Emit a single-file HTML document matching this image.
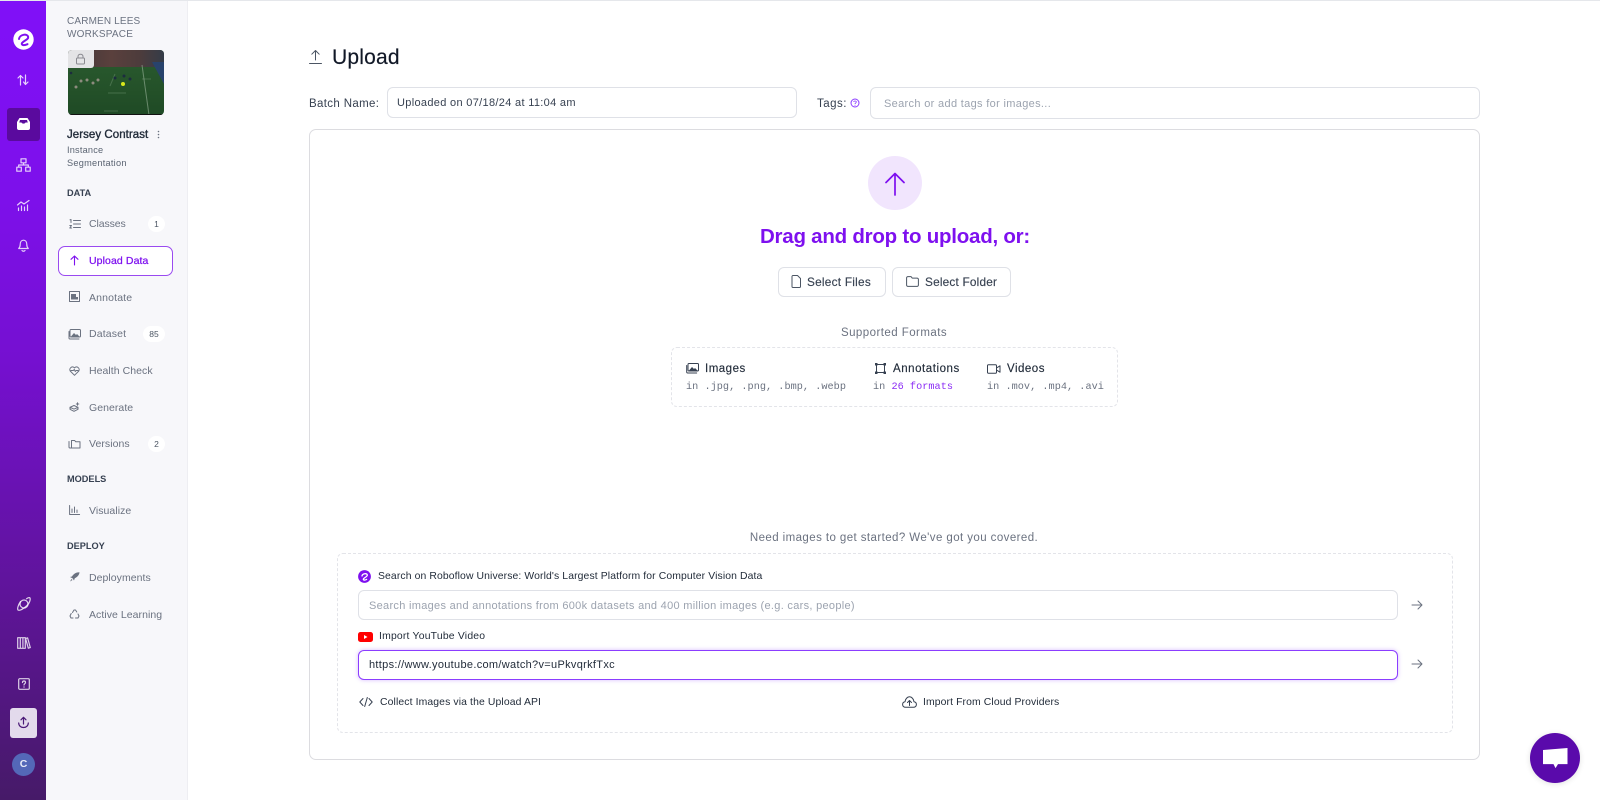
<!DOCTYPE html>
<html lang="en"><head><meta charset="utf-8"><title>Upload</title>
<style>
html,body{margin:0;padding:0;width:1600px;height:800px;overflow:hidden;background:#fff;font-family:"Liberation Sans",sans-serif;color:#1f2937}
.t{position:absolute;white-space:nowrap;line-height:16px;height:16px}
.b{position:absolute;box-sizing:border-box;background:#fff}
svg{position:absolute;overflow:visible}
.nav{font-size:10.5px;color:#6b7280;left:89px;letter-spacing:.05px}
.sec{font-size:9.2px;font-weight:bold;color:#374151;left:67px;letter-spacing:0}
.med{-webkit-text-stroke:.15px currentColor}
.badge{position:absolute;background:#fff;border-radius:9px;height:16px;line-height:16px;text-align:center;font-size:8.5px;color:#4b5563}
.mono{font-family:"Liberation Mono",monospace;font-size:10.2px;letter-spacing:.04px;color:#6b7280}
.ic{fill:none;stroke:#fff;stroke-width:1.2;stroke-opacity:.8;stroke-linecap:round;stroke-linejoin:round}
.g{fill:none;stroke:#6b7280;stroke-width:1;stroke-linecap:round;stroke-linejoin:round}
.d{fill:none;stroke:#374151;stroke-width:1;stroke-linecap:round;stroke-linejoin:round}
</style></head><body>

<div style="position:absolute;left:0;top:0;width:1600px;height:1px;background:#e5e7eb"></div>
<div style="position:absolute;left:0;top:1px;width:46px;height:799px;background:linear-gradient(180deg,#8010f8 0%,#7d10ea 25%,#7510d0 45%,#5e1498 75%,#461a68 100%)"></div>
<div style="position:absolute;left:46px;top:1px;width:141px;height:799px;background:#f7f7fa;border-right:1px solid #eeeef2"></div>

<!-- rail -->
<svg style="left:13px;top:29px" width="21" height="21" viewBox="0 0 21 21"><circle cx="10.5" cy="10.5" r="10.2" fill="#fff"/><path d="M6 10C6.500 5.500 14.500 4 15.200 8c.3 2.500-4.200 3.500-6.200 6-1 1.500 1 3.200 5.500 1.200" fill="none" stroke="#7f10f0" stroke-width="2" stroke-linecap="round"/></svg>
<svg style="left:17px;top:74px" width="12" height="12" viewBox="0 0 12 12"><path class="ic" d="M3.500 11V1.500M1 4l2.500-2.500L6 4M8.500 1v9.500M6.500 8l2 2.500L11 8"/></svg>
<div style="position:absolute;left:7px;top:108px;width:33px;height:33px;border-radius:3px;background:#5a0a9e"></div>
<svg style="left:17px;top:118px" width="13" height="12" viewBox="0 0 13 12"><path d="M2.500 0h8L13 4v6a2 2 0 0 1-2 2H2a2 2 0 0 1-2-2V4zM3 2 2.200 4.500H4.500c.5 1.500 3.500 1.500 4 0h2.300L10 2z" fill="#fff" fill-rule="evenodd"/></svg>
<svg style="left:16px;top:158px" width="15" height="14" viewBox="0 0 15 14"><path class="ic" d="M5 .8h5v4H5zM7.500 4.800V7M2.700 9V7h9.600v2M.8 9.200h4.500v4H.8zM9.700 9.200h4.500v4H9.700z"/></svg>
<svg style="left:17px;top:200px" width="13" height="11" viewBox="0 0 13 11"><path class="ic" d="M.5 5 4 2l3 2 5-3.500M1.500 10.500V8M4.500 10.500V6M7.500 10.500V7M10.500 10.500V5"/></svg>
<svg style="left:18px;top:239px" width="11" height="13" viewBox="0 0 11 13"><path class="ic" d="M.7 9.500c1-1 1.500-2 1.500-4C2.200 3 3.500 1.200 5.500 1.200S8.800 3 8.800 5.500c0 2 .5 3 1.500 4zM4 11.500c.8 1 2.200 1 3 0"/></svg>
<svg style="left:17px;top:597px" width="14" height="14" viewBox="0 0 14 14"><circle class="ic" cx="7" cy="7" r="4"/><path class="ic" d="M3.500 4.500C.8 8.500.2 12 1 13c1.500 1 5-1 8.500-4S13.500 2 13 1c-.5-.7-2-.3-3.500.8"/></svg>
<svg style="left:17px;top:637px" width="14" height="12" viewBox="0 0 14 12"><path class="ic" d="M.7.700h2.600v10.600H.7zM3.300.700h2.600v10.600H3.300zM5.900.700h2.400v10.600H5.900zM8.600 1.500l2-.6 2.700 9.700-2 .6z"/></svg>
<svg style="left:18px;top:678px" width="12" height="12" viewBox="0 0 12 12"><rect class="ic" x=".7" y=".7" width="10.600" height="10.600" rx="1"/><path class="ic" d="M4.500 4.500C4.500 2.500 7.500 2.500 7.500 4.500 7.500 5.700 6 5.700 6 7"/><circle cx="6" cy="9" r=".6" fill="#fff"/></svg>
<div style="position:absolute;left:10px;top:708px;width:27px;height:30px;border-radius:3px;background:#e3daec"></div>
<svg style="left:17px;top:716px" width="13" height="13" viewBox="0 0 13 13"><path d="M6.500 8V1.500M4 3.800l2.500-2.500L9 3.800M1.700 7c0 6 9.600 6 9.600 0" fill="none" stroke="#4b1a78" stroke-width="1.200" stroke-linecap="round" stroke-linejoin="round"/></svg>
<div style="position:absolute;left:12px;top:753px;width:23px;height:23px;border-radius:50%;background:#5468b8;color:#e8ebf7;font-size:10.500px;font-weight:bold;line-height:23px;text-align:center">C</div>

<!-- project -->
<div class="t" style="left:67px;top:14px;font-size:10px;color:#6b7280;letter-spacing:.15px">CARMEN LEES</div>
<div class="t" style="left:67px;top:27px;font-size:10px;color:#6b7280;letter-spacing:.2px">WORKSPACE</div>
<svg style="left:68px;top:50px" width="96" height="65" viewBox="0 0 96 65">
<defs><clipPath id="c"><rect width="96" height="65" rx="4"/></clipPath>
<linearGradient id="gr" x1="0" y1="0" x2="0" y2="1"><stop offset="0" stop-color="#2b5c2f"/><stop offset="1" stop-color="#1f4a25"/></linearGradient>
<linearGradient id="cr" x1="0" y1="0" x2="1" y2="0"><stop offset="0" stop-color="#3f3638"/><stop offset=".45" stop-color="#5a403d"/><stop offset=".75" stop-color="#4d3c3c"/><stop offset="1" stop-color="#343c48"/></linearGradient></defs>
<g clip-path="url(#c)"><rect width="96" height="65" fill="url(#gr)"/><rect width="96" height="17" fill="url(#cr)"/>
<path d="M74 15 81 65" stroke="#9ab39b" stroke-width="1" opacity=".6"/><path d="M42 36 47 24M74 29h9M36 61h14M40 43h18" stroke="#8aa98b" stroke-width="1" opacity=".35"/>
<path d="M84 12 96 34V12z" fill="#28436c"/>
<g fill="#a89a94" opacity=".8"><circle cx="8" cy="37" r="1.500"/><circle cx="13" cy="31" r="1.500"/><circle cx="19" cy="30" r="1.500"/><circle cx="25" cy="33" r="1.500"/><circle cx="30" cy="30" r="1.500"/></g>
<g fill="#1c2c3f"><circle cx="47" cy="28" r="1.500"/><circle cx="62" cy="29" r="1.500"/><circle cx="56" cy="26" r="1.500"/><circle cx="3" cy="23" r="1.300"/></g>
<circle cx="55" cy="34" r="2" fill="#d8e81c"/><path d="M0 65h96" stroke="#111" stroke-width="2"/></g>
<path d="M0 4a4 4 0 0 1 4-4h22v15a3 3 0 0 1-3 3H0z" fill="#e4e4e6"/>
<rect x="8.500" y="8" width="8" height="6" rx="1" fill="none" stroke="#8a8a90" stroke-width="1"/><path d="M10 8V6.500c0-3 5-3 5 0V8" fill="none" stroke="#8a8a90" stroke-width="1"/></svg>
<div class="t med" style="left:67px;top:127px;font-size:11.500px;color:#1f2937;letter-spacing:.05px;-webkit-text-stroke-width:.35px">Jersey Contrast</div>
<svg style="left:157px;top:130px" width="3" height="10" viewBox="0 0 3 10"><g fill="#6b7280"><circle cx="1.500" cy="1.500" r=".8"/><circle cx="1.500" cy="4.500" r=".8"/><circle cx="1.500" cy="7.500" r=".8"/></g></svg>
<div class="t" style="left:67px;top:142px;font-size:9.200px;color:#5b6472;letter-spacing:.2px">Instance</div>
<div class="t" style="left:67px;top:155px;font-size:9.200px;color:#5b6472;letter-spacing:.25px">Segmentation</div>

<div class="t sec" style="top:184.500px">DATA</div>
<div class="t sec" style="top:471px">MODELS</div>
<div class="t sec" style="top:537.500px">DEPLOY</div>

<svg style="left:69px;top:219px" width="12" height="10" viewBox="0 0 12 10"><path class="g" d="M4.500 1.500h7M4.500 5h7M4.500 8.500h7M1 .8l1-.3v3M.8 6.500h1.700L.8 9h1.800"/></svg>
<div class="t nav" style="top:216px;letter-spacing:-.1px">Classes</div>
<div class="badge" style="left:148px;top:216px;width:17px">1</div>

<div class="b" style="left:58px;top:246px;width:115px;height:30px;border:1px solid #9a4af0;border-radius:7px"></div>
<svg style="left:70px;top:255px" width="9" height="11" viewBox="0 0 9 11"><path d="M4.500 10V1M1 4.300 4.500 1 8 4.300" fill="none" stroke="#7e10ef" stroke-width="1.100" stroke-linecap="round" stroke-linejoin="round"/></svg>
<div class="t med" style="left:89px;top:253px;font-size:10.500px;color:#7e10ef;letter-spacing:.1px;-webkit-text-stroke-width:.25px">Upload Data</div>

<svg style="left:69px;top:291px" width="11" height="11" viewBox="0 0 11 11"><rect class="g" x=".5" y=".5" width="10" height="10"/><path d="M2 8V3h5v3h2v2.500H2z" fill="#6b7280"/></svg>
<div class="t nav" style="top:289.500px;letter-spacing:.15px">Annotate</div>
<svg style="left:68px;top:329px" width="13" height="11" viewBox="0 0 13 11"><rect class="g" x="2" y=".5" width="10.500" height="7.500" rx="1"/><path class="g" d="M1 2.500v6.500a1 1 0 0 0 1 1h9"/><path d="M3 7.500l3-3.500 2 2 1-1 2.500 2.500z" fill="#6b7280"/></svg>
<div class="t nav" style="top:326px;letter-spacing:.15px">Dataset</div>
<div class="badge" style="left:143px;top:326px;width:22px">85</div>
<svg style="left:69px;top:366px" width="11" height="10" viewBox="0 0 11 10"><path class="g" d="M5.500 9.300 1.200 5C-.5 2.500 3.500-.8 5.500 2c2-2.800 6 .5 4.300 3zM2 4.500h2.300l1-1 1 2 .8-1H9"/></svg>
<div class="t nav" style="top:363px">Health Check</div>
<svg style="left:69px;top:402px" width="11" height="11" viewBox="0 0 11 11"><path class="g" d="M5 3.500 1 5.300l4 1.800 4-1.800zM1 5.300v2l4 2 4-2v-2M8.500.8v2.500M7.300 2h2.500"/></svg>
<div class="t nav" style="top:400px">Generate</div>
<svg style="left:68px;top:439px" width="13" height="10" viewBox="0 0 13 10"><path class="g" d="M3.500 9V1.500h3.200l1 1.300H12V9zM1 2.500V8a1 1 0 0 0 1 1h1.500"/></svg>
<div class="t nav" style="top:436px">Versions</div>
<div class="badge" style="left:148px;top:436px;width:17px">2</div>
<svg style="left:69px;top:505px" width="11" height="10" viewBox="0 0 11 10"><path class="g" d="M.6.500v9h10M3 7.500V4M5.500 7.500V2M8 7.500V5"/></svg>
<div class="t nav" style="top:503px">Visualize</div>
<svg style="left:69px;top:572px" width="11" height="10" viewBox="0 0 11 10"><path d="M10.500.3C7 .3 4.500 2 3 4.500L1 5l2.500 1.200L5 8.500l.8-2.200C8.500 5 10.300 3 10.500.3zM2.500 7 1 9.500 3.500 8z" fill="#6b7280"/></svg>
<div class="t nav" style="top:569.500px">Deployments</div>
<svg style="left:69px;top:609px" width="11" height="10" viewBox="0 0 11 10"><path class="g" d="M3.500 3.500 5 1h1.500l1.300 2M9 5l1 2-1 2H6.500M4 9H2L1 7l1.200-2.500"/></svg>
<div class="t nav" style="top:606.500px">Active Learning</div>

<!-- header -->
<svg style="left:309px;top:49px" width="13" height="16" viewBox="0 0 13 16"><path d="M6.500 11V1.500M2.800 5.200l3.700-3.700 3.700 3.700M.5 14.500h12" fill="none" stroke="#4b5563" stroke-width="1" stroke-linecap="round" stroke-linejoin="round"/></svg>
<div class="t med" style="left:332px;top:47px;height:22px;line-height:22px;font-size:21px;color:#111827;letter-spacing:.2px">Upload</div>
<div class="t" style="left:309px;top:96px;font-size:11.500px;color:#374151;letter-spacing:.35px">Batch Name:</div>
<div class="b" style="left:387px;top:87px;width:410px;height:31px;border:1px solid #dfe1e7;border-radius:6px"></div>
<div class="t" style="left:397px;top:95px;font-size:11px;color:#374151;letter-spacing:.32px">Uploaded on 07/18/24 at 11:04 am</div>
<div class="t" style="left:817px;top:96px;font-size:11.500px;color:#374151;letter-spacing:.5px">Tags:</div>
<svg style="left:850px;top:98px" width="10" height="10" viewBox="0 0 10 10"><circle cx="5" cy="5" r="4" fill="none" stroke="#8b3dff" stroke-width="1"/><path d="M3.700 4C3.800 2.700 6.300 2.700 6.300 4 6.300 5 5 5 5 6" fill="none" stroke="#8b3dff" stroke-width=".8"/><circle cx="5" cy="7.200" r=".5" fill="#8b3dff"/></svg>
<div class="b" style="left:870px;top:87px;width:610px;height:32px;border:1px solid #dfe1e7;border-radius:6px"></div>
<div class="t" style="left:884px;top:95.500px;font-size:11px;color:#9ca3af;letter-spacing:.33px">Search or add tags for images...</div>

<!-- main card -->
<div class="b" style="left:309px;top:129px;width:1171px;height:631px;border:1px solid #dcdce0;border-radius:7px"></div>
<div style="position:absolute;left:868px;top:156px;width:54px;height:54px;border-radius:50%;background:#f1e5fd"></div>
<svg style="left:884px;top:172px" width="22" height="24" viewBox="0 0 22 24"><path d="M11 23V1.500M2 10.500 11 1.500l9 9" fill="none" stroke="#7e10ef" stroke-width="1.700" stroke-linecap="round" stroke-linejoin="round"/></svg>
<div class="t" style="left:740px;top:225px;width:310px;height:24px;line-height:24px;text-align:center;font-size:20.500px;font-weight:bold;color:#7e10ef;letter-spacing:-.24px">Drag and drop to upload, or:</div>

<div class="b" style="left:778px;top:267px;width:108px;height:30px;border:1px solid #dfe1e7;border-radius:6px"></div>
<svg style="left:791px;top:275px" width="10" height="13" viewBox="0 0 10 13"><path d="M1 1.500a1 1 0 0 1 1-1h4.500L9.500 3.500V11.500a1 1 0 0 1-1 1H2a1 1 0 0 1-1-1z" fill="none" stroke="#4b5563" stroke-width="1" stroke-linejoin="round"/></svg>
<div class="t med" style="left:807px;top:274px;font-size:11.800px;color:#374151;letter-spacing:.25px">Select Files</div>
<div class="b" style="left:892px;top:267px;width:119px;height:30px;border:1px solid #dfe1e7;border-radius:6px"></div>
<svg style="left:906px;top:276px" width="13" height="11" viewBox="0 0 13 11"><path d="M.6 2A1.300 1.300 0 0 1 2 .6h3l1.200 1.500H11A1.300 1.300 0 0 1 12.400 3.500V9A1.300 1.300 0 0 1 11 10.400H2A1.300 1.300 0 0 1 .6 9z" fill="none" stroke="#4b5563" stroke-width="1" stroke-linejoin="round"/></svg>
<div class="t med" style="left:925px;top:274px;font-size:11.800px;color:#374151;letter-spacing:.2px">Select Folder</div>

<div class="t" style="left:774px;top:324.500px;width:240px;text-align:center;font-size:11.500px;color:#6b7280;letter-spacing:.45px">Supported Formats</div>
<div class="b" style="left:671px;top:347px;width:447px;height:60px;border:1px dashed #e3e4e9;border-radius:6px"></div>
<svg style="left:686px;top:363px" width="13" height="11" viewBox="0 0 13 11"><rect class="d" x="2" y=".5" width="10.500" height="7.500" rx="1"/><path class="d" d="M.7 2.500V9a1 1 0 0 0 1 1h9"/><path d="M3 7.500l3-3.500 2 2 1-1 2.500 2.500z" fill="#374151"/></svg>
<div class="t med" style="left:705px;top:361px;font-size:11.500px;color:#1f2937;letter-spacing:.5px">Images</div>
<div class="t mono" style="left:686px;top:379.500px">in .jpg, .png, .bmp, .webp</div>
<svg style="left:875px;top:363px" width="11" height="11" viewBox="0 0 11 11"><path class="d" d="M1.500 1.500h8v8h-8z"/><g fill="#374151"><rect x="0" y="0" width="2.500" height="2.500"/><rect x="8.500" y="0" width="2.500" height="2.500"/><rect x="0" y="8.500" width="2.500" height="2.500"/><rect x="8.500" y="8.500" width="2.500" height="2.500"/></g></svg>
<div class="t med" style="left:893px;top:361px;font-size:11.500px;color:#1f2937;letter-spacing:.55px">Annotations</div>
<div class="t mono" style="left:873px;top:379.500px">in <span style="color:#8b2cf5">26 formats</span></div>
<svg style="left:987px;top:364px" width="14" height="10" viewBox="0 0 14 10"><rect class="d" x=".5" y=".7" width="9" height="8.500" rx="1"/><path class="d" d="M9.500 4 13 1.800v6.400L9.500 6"/></svg>
<div class="t med" style="left:1007px;top:361px;font-size:11.500px;color:#1f2937;letter-spacing:.5px">Videos</div>
<div class="t mono" style="left:987px;top:379.500px">in .mov, .mp4, .avi</div>

<div class="t" style="left:694px;top:529.500px;width:400px;text-align:center;font-size:11.500px;color:#6b7280;letter-spacing:.42px">Need images to get started? We've got you covered.</div>

<div class="b" style="left:337px;top:553px;width:1116px;height:180px;border:1px dashed #e3e4e9;border-radius:6px"></div>
<svg style="left:358px;top:570px" width="13" height="13" viewBox="0 0 13 13"><circle cx="6.500" cy="6.500" r="6.400" fill="#7e10ef"/><path d="M4 6C4.300 3.500 9 2.800 9.300 5c.2 1.600-2.500 2.200-3.800 3.800-.6 1 .6 1.900 3.100.6" fill="none" stroke="#fff" stroke-width="1.300" stroke-linecap="round"/></svg>
<div class="t" style="left:378px;top:568.500px;font-size:10.400px;color:#1f2937;letter-spacing:.11px">Search on Roboflow Universe: World's Largest Platform for Computer Vision Data</div>
<div class="b" style="left:358px;top:590px;width:1040px;height:30px;border:1px solid #dfe1e7;border-radius:6px"></div>
<div class="t" style="left:369px;top:597.500px;font-size:11px;color:#9ca3af;letter-spacing:.3px">Search images and annotations from 600k datasets and 400 million images (e.g. cars, people)</div>
<svg style="left:1411px;top:600px" width="12" height="10" viewBox="0 0 12 10"><path class="g" d="M1 5h10M7 1l4 4-4 4"/></svg>

<svg style="left:358px;top:632px" width="15" height="10" viewBox="0 0 15 10"><rect width="15" height="10" rx="2.500" fill="#f00"/><path d="M6 3v4l3.500-2z" fill="#fff"/></svg>
<div class="t" style="left:379px;top:628.500px;font-size:10.400px;color:#1f2937;letter-spacing:.2px">Import YouTube Video</div>
<div class="b" style="left:358px;top:650px;width:1040px;height:30px;border:1px solid #8b3dff;border-radius:6px;box-shadow:0 0 4px rgba(139,61,255,.35)"></div>
<div class="t" style="left:369px;top:657px;font-size:11px;color:#1f2937;letter-spacing:.31px">https://www.youtube.com/watch?v=uPkvqrkfTxc</div>
<svg style="left:1411px;top:659px" width="12" height="10" viewBox="0 0 12 10"><path class="g" d="M1 5h10M7 1l4 4-4 4"/></svg>

<svg style="left:359px;top:697px" width="14" height="10" viewBox="0 0 14 10"><path class="d" d="M4 1.500.8 5 4 8.500M10 1.500 13.200 5 10 8.500M8.300.5 5.700 9.500"/></svg>
<div class="t" style="left:380px;top:694.500px;font-size:10.400px;color:#1f2937;letter-spacing:.12px">Collect Images via the Upload API</div>
<svg style="left:902px;top:696px" width="15" height="12" viewBox="0 0 15 12"><path class="d" d="M3.500 11.300C1.800 11.300.6 10 .6 8.500S1.700 6 3 5.800C3.300 3 5.300.8 7.500.8s4.200 2.200 4.500 5c1.300.2 2.400 1.200 2.400 2.700s-1.200 2.800-2.900 2.800zM7.500 9.500V4.500M5.500 6.500l2-2 2 2"/></svg>
<div class="t" style="left:923px;top:694.500px;font-size:10.400px;color:#1f2937;letter-spacing:.11px">Import From Cloud Providers</div>

<!-- chat -->
<div style="position:absolute;left:1530px;top:733px;width:50px;height:50px;border-radius:50%;background:#5a0aab;box-shadow:0 1px 6px rgba(0,0,0,.12)"></div>
<svg style="left:1543px;top:748px" width="25" height="21" viewBox="0 0 25 21"><path d="M0 2 24.500 0V16.500H15L12.500 20.500 10.500 16.500H0z" fill="#fff" transform="scale(1 .98)"/></svg>
</body></html>
